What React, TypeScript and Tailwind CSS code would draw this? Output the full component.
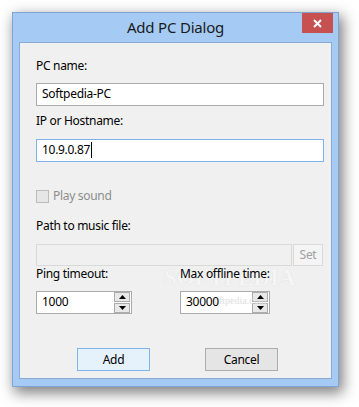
import React from "react";

function SpinButtons() {
  return (
    <div className="flex flex-col gap-[1px] pr-[1px] w-[17px]">
      <div className="h-[10px] w-[16px] border border-[#acacac] bg-[#e8e8e8] flex items-center justify-center">
        <svg width="7" height="4" viewBox="0 0 7 4">
          <polygon points="0,4 7,4 3.5,0" fill="#000" />
        </svg>
      </div>
      <div className="h-[10px] w-[16px] border border-[#acacac] bg-[#e8e8e8] flex items-center justify-center">
        <svg width="7" height="4" viewBox="0 0 7 4">
          <polygon points="0,0 7,0 3.5,4" fill="#000" />
        </svg>
      </div>
    </div>
  );
}

export default function App() {
  return (
    <div className="w-[359px] h-[407px] bg-white pt-[12px] pl-[12px] font-['Noto_Sans',sans-serif] text-[12px] text-black overflow-hidden">
      <div className="w-[327px] h-[375px] border border-[#7fa3d2] bg-[#a5cbf5] flex flex-col shadow-[3px_5px_13px_1px_rgba(0,0,0,0.5)]">
        {/* title bar */}
        <div className="relative h-[29px] flex justify-center pt-[4px]">
          <span className="text-[15px] leading-[20px] text-[#1a1a1a] tracking-[-0.2px]">Add PC Dialog</span>
          <div className="absolute right-[5px] top-0 w-[31px] h-[20px] bg-[#c75050] flex items-center justify-center">
            <svg width="9" height="9" viewBox="0 0 9 9">
              <path d="M1 1 L8 8 M8 1 L1 8" stroke="#fff" strokeWidth="2" />
            </svg>
          </div>
        </div>
        {/* client area */}
        <div className="relative ml-[6px] w-[313px] h-[337px] border border-[#8aa9d3] bg-[#f0f0f0] pl-[16px] flex flex-col leading-[16px] tracking-[-0.3px]">
          <span className="absolute left-[144px] top-[222px] font-['Liberation_Serif',serif] font-bold text-[23px] leading-[26px] tracking-[0px] text-[#f5f5f5] [text-shadow:0_0_1px_#d4d4d4] pointer-events-none">
            SOFTPEDIA
          </span>
          <div className="relative mt-[15px] h-[16px]">PC name:</div>
          <div className="relative mt-[9px] w-[288px] h-[23px] border border-[#ababab] bg-white pl-[5px] pt-[2px]">
            Softpedia-PC
          </div>
          <div className="relative mt-[7px] h-[16px]">IP or Hostname:</div>
          <div className="relative mt-[10px] w-[288px] h-[23px] border border-[#7eb4ea] bg-white pl-[5px] pt-[2px] flex items-start">
            <span>10.9.0.87</span>
            <span className="inline-block w-[1px] h-[16px] bg-black ml-[1px]" />
          </div>
          <div className="relative mt-[26px] h-[16px] flex items-center gap-[4px]">
            <div className="w-[13px] h-[13px] border border-[#bcbcbc] bg-[#e6e6e6]" />
            <span className="text-[#8d8d8d]">Play sound</span>
          </div>
          <div className="relative mt-[14px] h-[16px]">Path to music file:</div>
          <div className="relative mt-[10px] h-[22px] flex gap-[1px]">
            <div className="w-[256px] h-[22px] border border-[#d9d9d9] bg-[#f0f0f0]" />
            <div className="w-[30px] h-[22px] border border-[#d9d9d9] bg-[#f4f4f4] flex items-center justify-center text-[#a0a0a0]">
              Set
            </div>
          </div>
          <div className="relative h-[16px] grid grid-cols-[144px_1fr]">
            <span>Ping timeout:</span>
            <span>Max offline time:</span>
          </div>
          <div className="relative mt-[9px] h-[23px] grid grid-cols-[144px_1fr]">
            <div className="w-[96px] h-[23px] border border-[#ababab] bg-white flex items-stretch">
              <div className="flex-1 pl-[5px] pt-[2px]">1000</div>
              <SpinButtons />
            </div>
            <div className="w-[90px] h-[23px] border border-[#ababab] bg-white flex items-stretch">
              <div className="flex-1 pl-[5px] pt-[2px] relative">
                <span className="absolute left-[33px] top-[3px] font-['Liberation_Serif',serif] text-[10px] leading-[12px] tracking-[0px] text-[#e0e0e0]">
                  oftpedia.com
                </span>
                <span className="relative">30000</span>
              </div>
              <SpinButtons />
            </div>
          </div>
          <div className="relative mt-[34px] h-[23px] flex pl-[41px] gap-[55px]">
            <div className="w-[73px] h-[23px] border border-[#7eb4ea] bg-[#e5f1fb] flex items-center justify-center">
              Add
            </div>
            <div className="w-[73px] h-[23px] border border-[#acacac] bg-[#e5e5e5] flex items-center justify-center">
              Cancel
            </div>
          </div>
        </div>
      </div>
    </div>
  );
}
